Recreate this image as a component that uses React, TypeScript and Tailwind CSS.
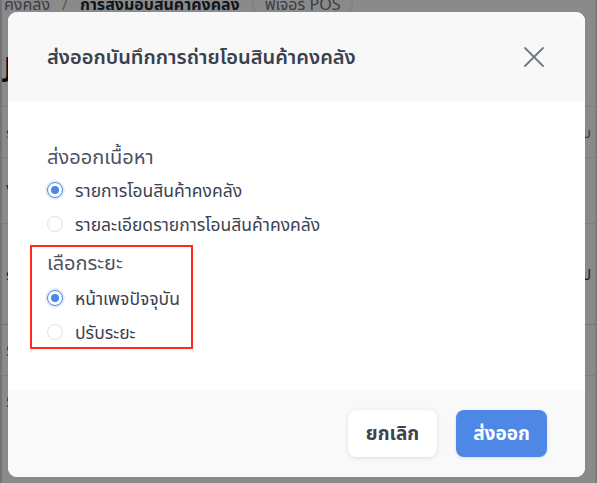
import React, { useState } from 'react';

const FONT = { fontFamily: '"Noto Sans", "Noto Sans Thai", "Liberation Sans", sans-serif' };

interface RadioRowProps {
  label: string;
  checked: boolean;
  onSelect: () => void;
}

const RadioRow: React.FC<RadioRowProps> = ({ label, checked, onSelect }) => (
  <button onClick={onSelect} className="flex h-[34px] items-center gap-[12px] text-left">
    <span
      className={`flex h-[16px] w-[16px] items-center justify-center rounded-full border bg-white ${
        checked ? 'border-[#4d86e8] shadow-[0_0_0_2px_rgba(77,134,232,0.15)]' : 'border-[#dfe3ea]'
      }`}
    >
      {checked && <span className="h-[8px] w-[8px] rounded-full bg-[#4d86e8]" />}
    </span>
    <span className="text-[17.5px] leading-[24px] text-[#3b4250]">{label}</span>
  </button>
);

export default function App() {
  const [content, setContent] = useState('list');
  const [range, setRange] = useState('page');

  return (
    <div className="relative h-[483px] w-[597px] overflow-hidden bg-white" style={FONT}>
      {/* page behind the dialog */}
      <div className="flex h-full">
        <div className="w-[2px] bg-[#d4d4d4]" />
        <div className="flex flex-1 flex-col border-r-2 border-[#e4e4e4]">
          <div className="-mt-[9px] flex items-center gap-3 pl-[2px] text-[16px]">
            <span className="text-[#6b7280]">คงคลัง</span>
            <span className="text-[#9ca3af]">/</span>
            <span className="font-bold text-[#1f2937]">การส่งมอบสินค้าคงคลัง</span>
            <span className="rounded-full border border-[#e5e7eb] px-3 text-[#6b7280]">ฟีเจอร์ POS</span>
          </div>
          <div className="mt-[30px] pl-[2px] text-[26px] font-bold text-[#111827]">J</div>
          <div className="mt-[20px] h-[1px] bg-[#e5e7eb]" />
          <div className="flex h-[50px] items-center justify-between px-1 text-[14px] text-[#6b7280]">
            <span>ร</span>
            <span>ะเบ</span>
          </div>
          <div className="h-[1px] bg-[#e5e7eb]" />
          <div className="flex h-[65px] items-center px-1 text-[#374151]">\</div>
          <div className="h-[1px] bg-[#e5e7eb]" />
          <div className="flex h-[100px] items-center justify-between px-1 text-[14px] text-[#1f2937]">
            <span>ร</span>
            <span>ป</span>
          </div>
          <div className="h-[1px] bg-[#cbd5e1]" />
          <div className="flex h-[50px] items-center px-1 text-[14px] text-[#374151]">5</div>
          <div className="h-[1px] bg-[#e5e7eb]" />
          <div className="flex h-[50px] items-center px-1 text-[14px] text-[#374151]">5</div>
        </div>
      </div>

      {/* overlay */}
      <div className="absolute inset-0 bg-black/[0.46]" />

      {/* dialog */}
      <div className="absolute left-[8px] top-[12px] flex h-[465px] w-[577px] flex-col overflow-hidden rounded-[9px] bg-white">
        <div className="flex h-[89px] items-center justify-between bg-[#f8f8f8] pl-[39px] pr-[40px]">
          <h2 className="text-[20px] font-semibold text-[#3a414e]">ส่งออกบันทึกการถ่ายโอนสินค้าคงคลัง</h2>
          <svg width="22" height="22" viewBox="0 0 22 22" fill="none" stroke="#6f7888" strokeWidth="1.8" strokeLinecap="round">
            <path d="M2 2 L20 20 M20 2 L2 20" />
          </svg>
        </div>

        <div className="flex flex-1 flex-col bg-white pl-[39px] pt-[43px]">
          <div className="text-[20px] leading-[26px] text-[#4b5260]">ส่งออกเนื้อหา</div>
          <div className="mt-[3px] flex flex-col">
            <RadioRow label="รายการโอนสินค้าคงคลัง" checked={content === 'list'} onSelect={() => setContent('list')} />
            <RadioRow label="รายละเอียดรายการโอนสินค้าคงคลัง" checked={content === 'detail'} onSelect={() => setContent('detail')} />
          </div>

          <div className="relative mt-[9px] w-fit">
            <div className="text-[20px] leading-[26px] text-[#4b5260]">เลือกระยะ</div>
            <div className="mt-[5px] flex flex-col">
              <RadioRow label="หน้าเพจปัจจุบัน" checked={range === 'page'} onSelect={() => setRange('page')} />
              <RadioRow label="ปรับระยะ" checked={range === 'custom'} onSelect={() => setRange('custom')} />
            </div>
            <div className="pointer-events-none absolute -left-[17px] -top-[5px] h-[104px] w-[163px] border-2 border-[#ff2a1c]" />
          </div>
        </div>

        <div className="flex h-[87px] items-center justify-end gap-[19px] bg-[#f9f9f9] pr-[38px]">
          <button className="h-[47px] w-[89px] rounded-[8px] bg-white text-[19px] font-bold text-[#3d4450] shadow-[0_1px_4px_rgba(0,0,0,0.12)]">
            ยกเลิก
          </button>
          <button className="h-[47px] w-[91px] rounded-[8px] bg-[#4f87e6] text-[19px] font-bold text-white shadow-[0_1px_3px_rgba(0,0,0,0.12)]">
            ส่งออก
          </button>
        </div>
      </div>
    </div>
  );
}
